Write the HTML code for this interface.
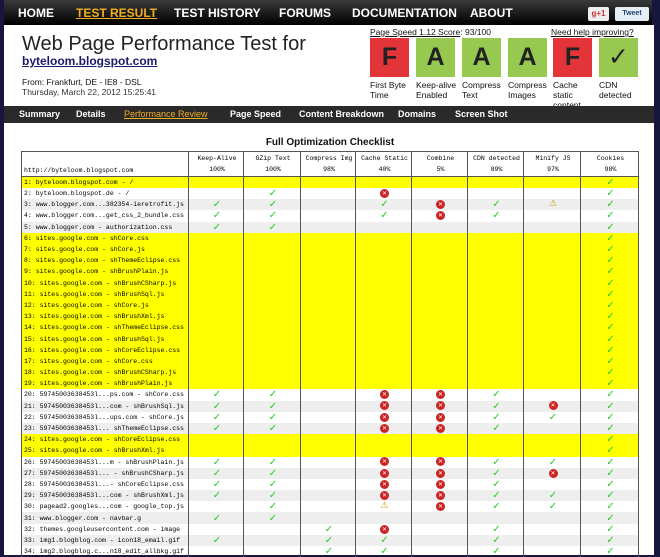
<!DOCTYPE html>
<html><head><meta charset="utf-8"><style>
*{margin:0;padding:0;box-sizing:border-box}
body{width:660px;height:555px;overflow:hidden;background:#17173d;font-family:"Liberation Sans",sans-serif;position:relative}
.nav{position:absolute;left:4px;top:0;width:648px;height:25px;background:linear-gradient(#3a3a3a,#000);}
.nav span{position:absolute;top:6px;color:#fff;font-weight:bold;font-size:12px}
.main{position:absolute;left:4px;top:25px;width:650px;height:530px;background:#fff}
.sub{position:absolute;left:4px;top:106px;width:650px;height:17px;background:#2a2a2a}
.sub span{position:absolute;top:3px;color:#fff;font-weight:bold;font-size:9px}
.g{position:absolute;top:38px;width:39px;height:39px;font-size:25px;font-weight:bold;color:#222;text-align:center;line-height:39px}
.r{background:#e3343a}.gr{background:#97c950}
.lb{position:absolute;top:80px;font-size:8.5px;line-height:10px;color:#111}
table{position:absolute;left:21px;top:151px;border-collapse:collapse;font-family:"Liberation Mono",monospace;font-size:6.5px;table-layout:fixed;width:617px}
td{height:11.2px;padding:0 0 0 2px;white-space:nowrap;overflow:hidden;border-left:1px solid #555;border-right:1px solid #555;text-align:center;line-height:11px}
td:first-child{text-align:left}
tr.h td{height:25px;vertical-align:middle;line-height:11px;border-top:1px solid #555;border-bottom:1px solid #555}
tr.y td{background:#ff0}
tr.a td{background:#eee}
.c{color:#2c2;font-weight:bold;font-size:10px;font-family:"DejaVu Sans",sans-serif}
.x{display:inline-block;width:9px;height:9px;border-radius:50%;background:#c22;color:#fff;font-size:6px;line-height:9px;font-family:"DejaVu Sans",sans-serif;vertical-align:middle}
.w{color:#c90;font-size:9px;font-family:"DejaVu Sans",sans-serif}
</style></head><body>
<div class="nav">
<span style="left:14px">HOME</span>
<span style="left:72px;color:#f0b020;text-decoration:underline">TEST RESULT</span>
<span style="left:170px">TEST HISTORY</span>
<span style="left:275px">FORUMS</span>
<span style="left:348px">DOCUMENTATION</span>
<span style="left:466px">ABOUT</span>
<div style="position:absolute;left:584px;top:7px;width:21px;height:14px;background:#eee;border-radius:2px;font-size:8px;color:#c33;font-weight:bold;text-align:center;line-height:14px">g+1</div>
<div style="position:absolute;left:611px;top:7px;width:34px;height:14px;background:#e6eef5;border-radius:2px;font-size:7px;color:#247;font-weight:bold;text-align:center;line-height:14px">Tweet</div>
</div>
<div class="main"></div>
<div style="position:absolute;left:22px;top:33px;font-size:20px;color:#222">Web Page Performance Test for</div>
<div style="position:absolute;left:22px;top:54px;font-size:12px;font-weight:bold;color:#1a1a6a;text-decoration:underline">byteloom.blogspot.com</div>
<div style="position:absolute;left:22px;top:77px;font-size:8.5px;color:#111">From: Frankfurt, DE - IE8 - DSL</div>
<div style="position:absolute;left:22px;top:87px;font-size:8.5px;color:#333">Thursday, March 22, 2012 15:25:41</div>
<div style="position:absolute;left:370px;top:27px;font-size:8.5px;color:#111"><u>Page Speed 1.12 Score</u>: 93/100</div>
<div style="position:absolute;left:551px;top:27px;font-size:8.5px;color:#111;text-decoration:underline">Need help improving?</div>
<div class="g r" style="left:370px">F</div><div class="g gr" style="left:416px">A</div><div class="g gr" style="left:462px">A</div><div class="g gr" style="left:508px">A</div><div class="g r" style="left:553px">F</div><div class="g gr" style="left:599px;font-weight:normal">✓</div>
<div class="lb" style="left:370px">First Byte<br>Time</div>
<div class="lb" style="left:416px">Keep-alive<br>Enabled</div>
<div class="lb" style="left:462px">Compress<br>Text</div>
<div class="lb" style="left:508px">Compress<br>Images</div>
<div class="lb" style="left:553px">Cache<br>static<br>content</div>
<div class="lb" style="left:599px">CDN<br>detected</div>
<div class="sub">
<span style="left:15px">Summary</span><span style="left:72px">Details</span><span style="left:120px;color:#f0b020;text-decoration:underline;font-weight:normal">Performance Review</span><span style="left:226px">Page Speed</span><span style="left:295px">Content Breakdown</span><span style="left:394px">Domains</span><span style="left:451px">Screen Shot</span>
</div>
<div style="position:absolute;left:0;width:660px;top:137px;text-align:center;font-size:10px;font-weight:bold;color:#111">Full Optimization Checklist</div>
<table>
<colgroup><col style="width:167px"><col style="width:55px"><col style="width:57px"><col style="width:55px"><col style="width:56px"><col style="width:56px"><col style="width:56px"><col style="width:57px"><col style="width:58px"></colgroup>
<tr class="h"><td style="vertical-align:bottom">http://byteloom.blogspot.com</td><td>Keep-Alive<br>100%</td><td>GZip Text<br>100%</td><td>Compress Img<br>98%</td><td>Cache Static<br>40%</td><td>Combine<br>5%</td><td>CDN detected<br>89%</td><td>Minify JS<br>97%</td><td>Cookies<br>98%</td></tr>
<tr class="y"><td>1: byteloom.blogspot.com - /</td><td></td><td></td><td></td><td></td><td></td><td></td><td></td><td class="c">✓</td></tr>
<tr><td>2: byteloom.blogspot.de - /</td><td></td><td class="c">✓</td><td></td><td><span class="x">✕</span></td><td></td><td></td><td></td><td class="c">✓</td></tr>
<tr class="a"><td>3: www.blogger.com...382354-ieretrofit.js</td><td class="c">✓</td><td class="c">✓</td><td></td><td class="c">✓</td><td><span class="x">✕</span></td><td class="c">✓</td><td class="w">⚠</td><td class="c">✓</td></tr>
<tr><td>4: www.blogger.com...get_css_2_bundle.css</td><td class="c">✓</td><td class="c">✓</td><td></td><td class="c">✓</td><td><span class="x">✕</span></td><td class="c">✓</td><td></td><td class="c">✓</td></tr>
<tr class="a"><td>5: www.blogger.com - authorization.css</td><td class="c">✓</td><td class="c">✓</td><td></td><td></td><td></td><td></td><td></td><td class="c">✓</td></tr>
<tr class="y"><td>6: sites.google.com - shCore.css</td><td></td><td></td><td></td><td></td><td></td><td></td><td></td><td class="c">✓</td></tr>
<tr class="y"><td>7: sites.google.com - shCore.js</td><td></td><td></td><td></td><td></td><td></td><td></td><td></td><td class="c">✓</td></tr>
<tr class="y"><td>8: sites.google.com - shThemeEclipse.css</td><td></td><td></td><td></td><td></td><td></td><td></td><td></td><td class="c">✓</td></tr>
<tr class="y"><td>9: sites.google.com - shBrushPlain.js</td><td></td><td></td><td></td><td></td><td></td><td></td><td></td><td class="c">✓</td></tr>
<tr class="y"><td>10: sites.google.com - shBrushCSharp.js</td><td></td><td></td><td></td><td></td><td></td><td></td><td></td><td class="c">✓</td></tr>
<tr class="y"><td>11: sites.google.com - shBrushSql.js</td><td></td><td></td><td></td><td></td><td></td><td></td><td></td><td class="c">✓</td></tr>
<tr class="y"><td>12: sites.google.com - shCore.js</td><td></td><td></td><td></td><td></td><td></td><td></td><td></td><td class="c">✓</td></tr>
<tr class="y"><td>13: sites.google.com - shBrushXml.js</td><td></td><td></td><td></td><td></td><td></td><td></td><td></td><td class="c">✓</td></tr>
<tr class="y"><td>14: sites.google.com - shThemeEclipse.css</td><td></td><td></td><td></td><td></td><td></td><td></td><td></td><td class="c">✓</td></tr>
<tr class="y"><td>15: sites.google.com - shBrushSql.js</td><td></td><td></td><td></td><td></td><td></td><td></td><td></td><td class="c">✓</td></tr>
<tr class="y"><td>16: sites.google.com - shCoreEclipse.css</td><td></td><td></td><td></td><td></td><td></td><td></td><td></td><td class="c">✓</td></tr>
<tr class="y"><td>17: sites.google.com - shCore.css</td><td></td><td></td><td></td><td></td><td></td><td></td><td></td><td class="c">✓</td></tr>
<tr class="y"><td>18: sites.google.com - shBrushCSharp.js</td><td></td><td></td><td></td><td></td><td></td><td></td><td></td><td class="c">✓</td></tr>
<tr class="y"><td>19: sites.google.com - shBrushPlain.js</td><td></td><td></td><td></td><td></td><td></td><td></td><td></td><td class="c">✓</td></tr>
<tr><td>20: 59745003638453l...ps.com - shCore.css</td><td class="c">✓</td><td class="c">✓</td><td></td><td><span class="x">✕</span></td><td><span class="x">✕</span></td><td class="c">✓</td><td></td><td class="c">✓</td></tr>
<tr class="a"><td>21: 59745003638453l...com - shBrushSql.js</td><td class="c">✓</td><td class="c">✓</td><td></td><td><span class="x">✕</span></td><td><span class="x">✕</span></td><td class="c">✓</td><td><span class="x">✕</span></td><td class="c">✓</td></tr>
<tr><td>22: 59745003638453l...ups.com - shCore.js</td><td class="c">✓</td><td class="c">✓</td><td></td><td><span class="x">✕</span></td><td><span class="x">✕</span></td><td class="c">✓</td><td class="c">✓</td><td class="c">✓</td></tr>
<tr class="a"><td>23: 59745003638453l... shThemeEclipse.css</td><td class="c">✓</td><td class="c">✓</td><td></td><td><span class="x">✕</span></td><td><span class="x">✕</span></td><td class="c">✓</td><td></td><td class="c">✓</td></tr>
<tr class="y"><td>24: sites.google.com - shCoreEclipse.css</td><td></td><td></td><td></td><td></td><td></td><td></td><td></td><td class="c">✓</td></tr>
<tr class="y"><td>25: sites.google.com - shBrushXml.js</td><td></td><td></td><td></td><td></td><td></td><td></td><td></td><td class="c">✓</td></tr>
<tr><td>26: 59745003638453l...m - shBrushPlain.js</td><td class="c">✓</td><td class="c">✓</td><td></td><td><span class="x">✕</span></td><td><span class="x">✕</span></td><td class="c">✓</td><td class="c">✓</td><td class="c">✓</td></tr>
<tr class="a"><td>27: 59745003638453l... - shBrushCSharp.js</td><td class="c">✓</td><td class="c">✓</td><td></td><td><span class="x">✕</span></td><td><span class="x">✕</span></td><td class="c">✓</td><td><span class="x">✕</span></td><td class="c">✓</td></tr>
<tr><td>28: 59745003638453l...- shCoreEclipse.css</td><td class="c">✓</td><td class="c">✓</td><td></td><td><span class="x">✕</span></td><td><span class="x">✕</span></td><td class="c">✓</td><td></td><td class="c">✓</td></tr>
<tr class="a"><td>29: 59745003638453l...com - shBrushXml.js</td><td class="c">✓</td><td class="c">✓</td><td></td><td><span class="x">✕</span></td><td><span class="x">✕</span></td><td class="c">✓</td><td class="c">✓</td><td class="c">✓</td></tr>
<tr><td>30: pagead2.googles...com - google_top.js</td><td></td><td class="c">✓</td><td></td><td class="w">⚠</td><td><span class="x">✕</span></td><td class="c">✓</td><td class="c">✓</td><td class="c">✓</td></tr>
<tr class="a"><td>31: www.blogger.com - navbar.g</td><td class="c">✓</td><td class="c">✓</td><td></td><td></td><td></td><td></td><td></td><td class="c">✓</td></tr>
<tr><td>32: themes.googleusercontent.com - image</td><td></td><td></td><td class="c">✓</td><td><span class="x">✕</span></td><td></td><td class="c">✓</td><td></td><td class="c">✓</td></tr>
<tr class="a"><td>33: img1.blogblog.com - icon18_email.gif</td><td class="c">✓</td><td></td><td class="c">✓</td><td class="c">✓</td><td></td><td class="c">✓</td><td></td><td class="c">✓</td></tr>
<tr><td>34: img2.blogblog.c...n18_edit_allbkg.gif</td><td></td><td></td><td class="c">✓</td><td class="c">✓</td><td></td><td class="c">✓</td><td></td><td class="c">✓</td></tr>
</table>
</body></html>
